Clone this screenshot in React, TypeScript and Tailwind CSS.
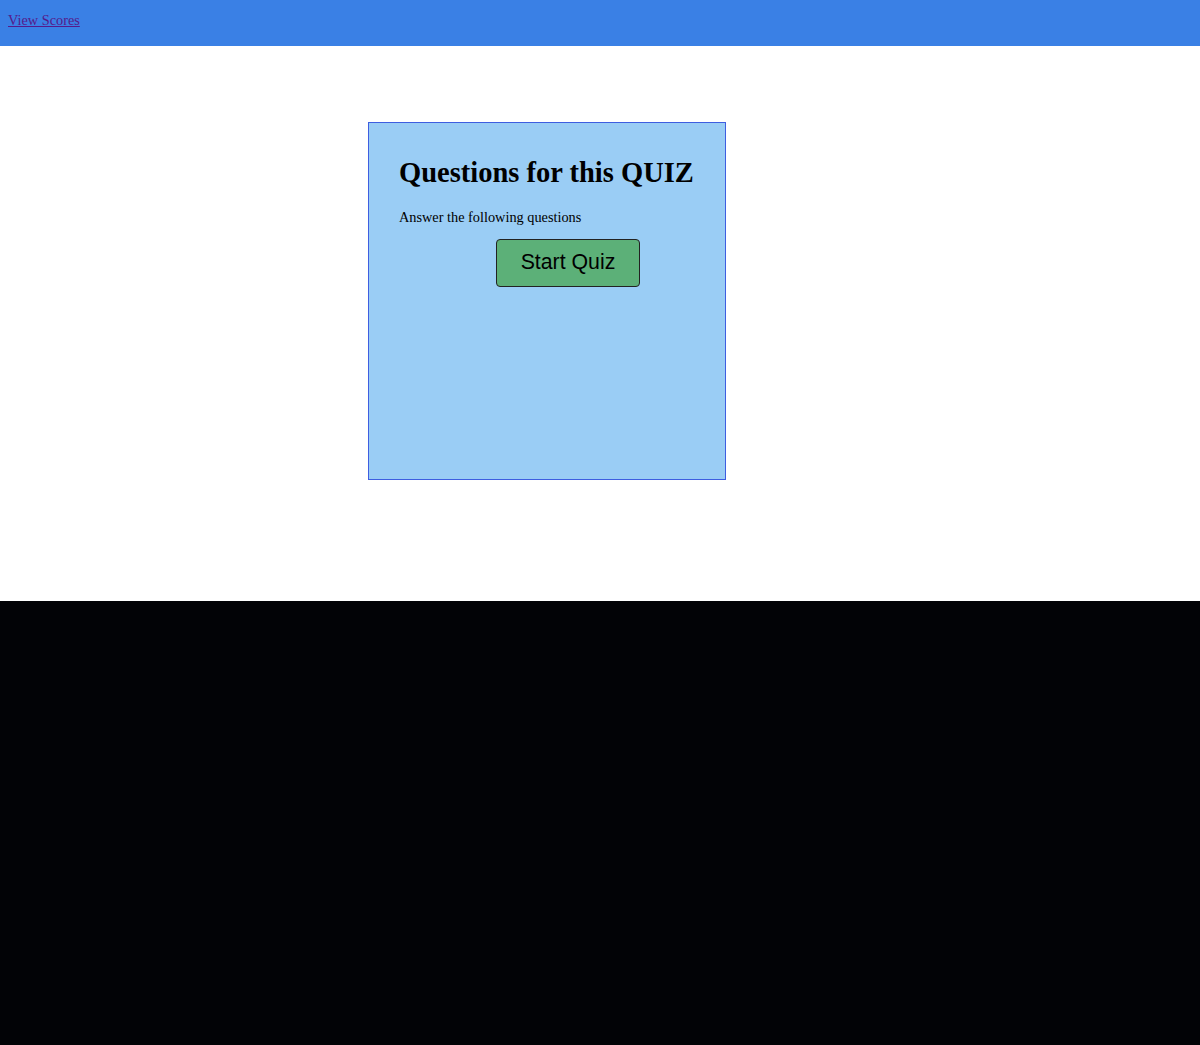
import React from "react";

const serif = { fontFamily: '"Liberation Serif", "Times New Roman", serif' };

export default function App() {
  return (
    <div className="min-h-[1045px] flex flex-col bg-[#020306]" style={serif}>
      <header className="h-[46px] bg-[#3a80e5] px-2 pt-[8px]">
        <a href="#" className="text-[14.3px] leading-[18px] text-[#551a8b] underline">
          View Scores
        </a>
      </header>

      <main className="h-[555px] bg-white pt-[76px] pl-[368px]">
        <div className="w-[358px] h-[358px] bg-[#9acdf5] border border-[#3e5ee0] px-[30px] pt-[31px]">
          <h1 className="text-[28.5px] font-bold leading-[37px] text-black whitespace-nowrap">
            Questions for this QUIZ
          </h1>
          <p className="mt-[17px] text-[14.3px] leading-[18px] text-black">
            Answer the following questions
          </p>
          <button
            className="mt-[13px] ml-[97px] w-[144px] h-[48px] rounded-[4px] bg-[#5cb078] border border-[#222] text-[21.3px] text-black"
            style={{ fontFamily: '"Liberation Sans", Arial, sans-serif' }}
          >
            Start Quiz
          </button>
        </div>
      </main>
    </div>
  );
}
